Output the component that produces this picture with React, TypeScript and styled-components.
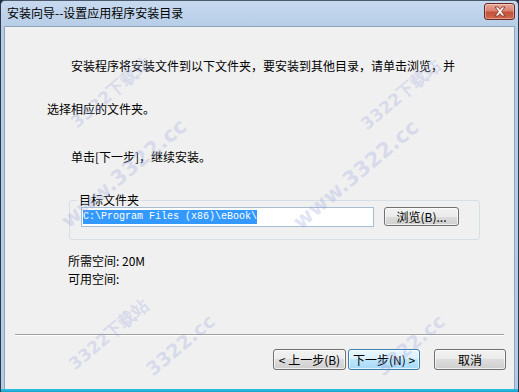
import React from "react";
import styled, { createGlobalStyle } from "styled-components";

const GlobalStyle = createGlobalStyle`
  html, body {
    margin: 0;
    padding: 0;
    background: #1f2d3a;
  }
  body {
    font-family: "Noto Sans CJK SC", "DejaVu Sans", sans-serif;
    font-size: 12px;
    color: #000;
  }
`;

interface Mark {
  text: string;
  x: number;
  y: number;
  size: number;
}

// watermark start points (bottom-left of the text), in client coordinates
const marks: Mark[] = [
  { text: "3322下载站", x: 74, y: 104, size: 17 },
  { text: "www.3322.cc", x: 66, y: 205, size: 21 },
  { text: "3322下载站", x: 364, y: 106, size: 17 },
  { text: "www.3322.cc", x: 298, y: 206, size: 21 },
  { text: "3322下载站", x: 72, y: 346, size: 17 },
  { text: "3322.cc", x: 150, y: 352, size: 19 },
  { text: "3322.cc", x: 380, y: 352, size: 19 },
];

function App() {
  return (
    <>
      <GlobalStyle />
      <Window>
        <TitleBar>
          <Title>安装向导--设置应用程序安装目录</Title>
          <CloseButton>
            <svg width="14" height="11" viewBox="0 0 14 11">
              <path
                d="M2 1 L5 1 L7 3.5 L9 1 L12 1 L8.5 5.5 L12 10 L9 10 L7 7.5 L5 10 L2 10 L5.5 5.5 Z"
                fill="#fff"
                stroke="#7a2a1e"
                strokeWidth="0.8"
                strokeLinejoin="round"
              />
            </svg>
          </CloseButton>
        </TitleBar>
        <Client>
          <Line $indent={66} $top={32}>
            安装程序将安装文件到以下文件夹，要安装到其他目录，请单击浏览，并
          </Line>
          <Line $indent={42} $top={29}>
            选择相应的文件夹。
          </Line>
          <Line $indent={66} $top={34}>
            单击[下一步]，继续安装。
          </Line>
          <Group>
            <GroupLabel>目标文件夹</GroupLabel>
            <PathRow>
              <PathInput>
                <Selected>C:\Program Files (x86)\eBook\</Selected>
              </PathInput>
              <Button $width={75} $height={19}>
                浏览(B)...
              </Button>
            </PathRow>
          </Group>
          <SpaceInfo>
            <span>所需空间: 20M</span>
            <span>可用空间:</span>
          </SpaceInfo>
          <Separator />
          <Footer>
            <Button $width={73}>&lt; 上一步(B)</Button>
            <Button $width={72} $primary>
              下一步(N) &gt;
            </Button>
            <Spacer />
            <Button $width={72}>取消</Button>
          </Footer>
          {marks.map((m, i) => (
            <Watermark
              key={i}
              style={{ left: m.x, top: m.y - m.size, fontSize: m.size }}
            >
              {m.text}
            </Watermark>
          ))}
        </Client>
        <BottomEdge />
      </Window>
    </>
  );
}

export default App;

const Window = styled.div`
  width: 519px;
  height: 392px;
  box-sizing: border-box;
  border-left: 1px solid #2b3948;
  border-right: 1px solid #2b3948;
  border-top: 1px solid #4a5a6c;
  border-radius: 5px 5px 0 0;
  background: linear-gradient(#c6d9ef, #b7cde7 26px, #b4cbe5);
  display: flex;
  flex-direction: column;
  overflow: hidden;
`;

const TitleBar = styled.div`
  height: 25px;
  flex: none;
  display: flex;
  align-items: center;
  padding: 0 3px 0 6px;
`;

const Title = styled.div`
  font-size: 12px;
  color: #000;
  margin-top: -2px;
`;

const CloseButton = styled.div`
  margin-left: auto;
  margin-top: -4px;
  width: 31px;
  height: 17px;
  box-sizing: border-box;
  border: 1px solid #6b2a22;
  border-radius: 3px;
  background: linear-gradient(#e8a99c, #d9826f 45%, #c45139 55%, #cf6a4f);
  box-shadow: inset 0 0 0 1px rgba(255, 255, 255, 0.35);
  display: flex;
  align-items: center;
  justify-content: center;
`;

const Client = styled.div`
  position: relative;
  flex: 1;
  margin: 0 3px;
  border: 1px solid #8ea4bc;
  border-bottom: none;
  background: #f0f0f0;
  display: flex;
  flex-direction: column;
  overflow: hidden;
`;

const Watermark = styled.span`
  position: absolute;
  transform: rotate(-40deg);
  transform-origin: left bottom;
  font-family: "DejaVu Sans", sans-serif;
  font-weight: bold;
  line-height: 1;
  color: rgba(150, 162, 220, 0.28);
  white-space: nowrap;
  pointer-events: none;
`;

const Line = styled.div<{ $indent: number; $top: number }>`
  padding-left: ${(p) => p.$indent}px;
  margin-top: ${(p) => p.$top}px;
  line-height: 14px;
  white-space: nowrap;
`;

const Group = styled.fieldset`
  margin: 29px 0 0 64px;
  width: 411px;
  height: 47px;
  box-sizing: border-box;
  border: 1px solid #d5dfe5;
  border-radius: 3px;
  padding: 0 0 0 11px;
`;

const GroupLabel = styled.legend`
  padding: 0 2px;
  margin-left: -4px;
  line-height: 14px;
`;

const PathRow = styled.div`
  display: flex;
  align-items: flex-start;
  gap: 10px;
`;

const PathInput = styled.div`
  width: 293px;
  height: 20px;
  box-sizing: border-box;
  border: 1px solid #a8bcd3;
  background: #fff;
  padding: 2px 1px;
  display: flex;
  align-items: center;
`;

const Selected = styled.span`
  background: #3399ff;
  color: #fff;
  font-family: "Liberation Mono", "DejaVu Sans Mono", monospace;
  font-size: 10px;
  line-height: 14px;
  height: 14px;
  white-space: pre;
`;

const Button = styled.div<{ $width: number; $height?: number; $primary?: boolean }>`
  width: ${(p) => p.$width}px;
  height: ${(p) => p.$height ?? 21}px;
  box-sizing: border-box;
  border: 1px solid ${(p) => (p.$primary ? "#3c7fb1" : "#707070")};
  border-radius: 3px;
  background: ${(p) =>
    p.$primary
      ? "linear-gradient(#eaf6fd, #d9f0fc 50%, #bee6fd 50%, #a7d9f5)"
      : "linear-gradient(#f2f2f2, #ebebeb 50%, #dddddd 50%, #cfcfcf)"};
  box-shadow: inset 0 0 0 1px rgba(255, 255, 255, 0.7);
  display: flex;
  align-items: center;
  justify-content: center;
  font-size: 12px;
  white-space: nowrap;
  flex: none;
`;

const SpaceInfo = styled.div`
  margin: 14px 0 0 63px;
  display: flex;
  flex-direction: column;
  gap: 4px;
  line-height: 14px;
`;

const Separator = styled.div`
  margin: 48px 10px 0 10px;
  height: 1px;
  background: #a0a0a0;
  border-bottom: 1px solid #ffffff;
`;

const Footer = styled.div`
  display: flex;
  align-items: center;
  gap: 2px;
  padding: 13px 8px 0 268px;
`;

const Spacer = styled.div`
  width: 13px;
`;

const BottomEdge = styled.div`
  height: 3px;
  flex: none;
  background: linear-gradient(#2bc4e6, #1aa0c8);
`;
